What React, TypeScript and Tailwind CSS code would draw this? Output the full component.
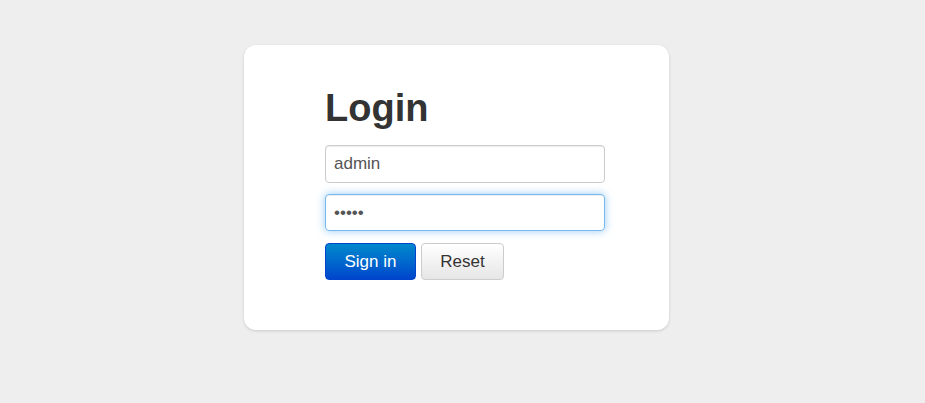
import { useState } from 'react'

export default function App() {
  const [user, setUser] = useState('admin')
  const [pass, setPass] = useState('12345')

  return (
    <div className="min-h-[403px] w-full bg-[#eeeeee] flex justify-center pr-[12px] font-['Liberation_Sans',Arial,sans-serif]">
      <div className="mt-[45px] w-[425px] h-[285px] bg-white rounded-[12px] shadow-[0_1px_3px_rgba(0,0,0,0.15)] pl-[81px] pt-[40px]">
        <h1 className="text-[38px] leading-[46px] font-bold text-[#333333] mb-[14px]">Login</h1>
        <form className="flex flex-col" onSubmit={(e) => e.preventDefault()}>
          <input
            value={user}
            onChange={(e) => setUser(e.target.value)}
            className="w-[280px] h-[38px] px-[8px] text-[17px] text-[#555555] border border-[#cccccc] rounded-[4px] shadow-[inset_0_1px_1px_rgba(0,0,0,0.075)] outline-none"
          />
          <input
            type="password"
            value={pass}
            onChange={(e) => setPass(e.target.value)}
            className="mt-[11px] w-[280px] h-[37px] px-[8px] text-[17px] text-[#555555] border border-[rgba(82,168,236,0.8)] rounded-[4px] shadow-[inset_0_1px_1px_rgba(0,0,0,0.075),0_0_8px_rgba(82,168,236,0.6)] outline-none"
          />
          <div className="mt-[12px] flex gap-[5px]">
            <button className="w-[91px] h-[37px] text-[17px] text-white rounded-[4px] border border-[#0044cc] bg-gradient-to-b from-[#0088cc] to-[#0044cc]">
              Sign in
            </button>
            <button
              type="reset"
              className="w-[83px] h-[37px] text-[17px] text-[#333333] rounded-[4px] border border-[#cccccc] bg-gradient-to-b from-white to-[#e6e6e6]"
            >
              Reset
            </button>
          </div>
        </form>
      </div>
    </div>
  )
}
